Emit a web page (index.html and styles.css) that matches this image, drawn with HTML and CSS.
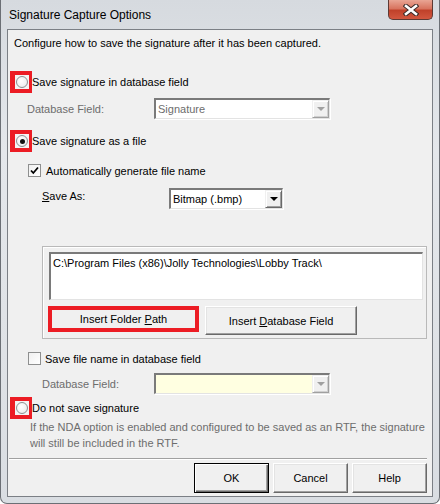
FILE: index.html
```html
<!DOCTYPE html>
<html lang="en">
<head>
  <meta charset="UTF-8">
  <title>Signature Capture Options</title>
  <link rel="stylesheet" href="styles.css">
</head>
<body>
  <div class="window">
    <div class="titlebar">
      <span class="title">Signature Capture Options</span>
      <div class="close">
        <svg width="16" height="12" viewBox="0 0 16 12">
          <path d="M3 2 L13 10 M13 2 L3 10" stroke="#3b2a28" stroke-width="4.6" stroke-linecap="square"/>
          <path d="M3 2 L13 10 M13 2 L3 10" stroke="#ffffff" stroke-width="2.6" stroke-linecap="square"/>
        </svg>
      </div>
    </div>

    <div class="client">
      <div class="intro">Configure how to save the signature after it has been captured.</div>

      <div class="option first">
        <span class="mark"><span class="radio-bg"><span class="radio"></span></span></span>
        <span>Save signature in database field</span>
      </div>

      <div class="field field-1">
        <span class="field-label disabled">Database Field:</span>
        <div class="combo combo-wide disabled-combo">
          <span class="combo-text">Signature</span>
          <span class="combo-btn"><span class="arrow"></span></span>
        </div>
      </div>

      <div class="option second">
        <span class="mark"><span class="radio-bg"><span class="radio checked"></span></span></span>
        <span>Save signature as a file</span>
      </div>

      <div class="check-row auto">
        <span class="checkbox checked">
          <svg width="11" height="11" viewBox="0 0 11 11"><path d="M2 5.5 L4.3 8 L9 2.5" fill="none" stroke="#000" stroke-width="1.8"/></svg>
        </span>
        <span>Automatically generate file name</span>
      </div>

      <div class="field save-as">
        <span class="field-label"><u>S</u>ave As:</span>
        <div class="combo combo-small">
          <span class="combo-text">Bitmap (.bmp)</span>
          <span class="combo-btn"><span class="arrow"></span></span>
        </div>
      </div>

      <div class="panel">
        <div class="path-box">C:\Program Files (x86)\Jolly Technologies\Lobby Track\</div>
        <div class="panel-buttons">
          <button class="btn insert marked">Insert Folder <u>P</u>ath</button>
          <button class="btn insert">Insert <u>D</u>atabase Field</button>
        </div>
      </div>

      <div class="check-row save-name">
        <span class="checkbox"></span>
        <span>Save file name in database field</span>
      </div>

      <div class="field field-2">
        <span class="field-label disabled">Database Field:</span>
        <div class="combo combo-wide yellow disabled-combo">
          <span class="combo-text"></span>
          <span class="combo-btn"><span class="arrow"></span></span>
        </div>
      </div>

      <div class="option third">
        <span class="mark"><span class="radio-bg"><span class="radio"></span></span></span>
        <span>Do not save signature</span>
      </div>

      <div class="note">If the NDA option is enabled and configured to be saved as an RTF, the signature<br>will still be included in the RTF.</div>

      <div class="separator"></div>

      <div class="footer">
        <button class="btn footer-btn default">OK</button>
        <button class="btn footer-btn">Cancel</button>
        <button class="btn footer-btn">Help</button>
      </div>
    </div>
  </div>
</body>
</html>
```

FILE: styles.css
```css
body {
  margin: 0;
  padding: 0;
  background: #ffffff;
  font-family: "Liberation Sans", Arial, sans-serif;
  font-size: 11px;
  color: #000;
}
.window {
  box-sizing: border-box;
  width: 440px;
  height: 504px;
  padding: 0 6px 6px 6px;
  border: 1px solid #6b6f75;
  border-top: none;
  border-radius: 0 0 7px 7px;
  background: linear-gradient(to bottom, #d6dadf 0%, #e4e7eb 30%, #dfe2e6 70%, #d9dde2 100%);
}
.titlebar {
  display: flex;
  align-items: flex-start;
  height: 29px;
}
.title {
  font-size: 12px;
  margin: 8px 0 0 2px;
  color: #000;
}
.close {
  margin-left: auto;
  width: 45px;
  height: 20px;
  box-sizing: border-box;
  border: 1px solid #5d3a34;
  border-top: none;
  border-radius: 0 0 5px 5px;
  background: linear-gradient(to bottom, #e9a594 0%, #d8745f 45%, #c0412a 55%, #d2573f 100%);
  display: flex;
  align-items: center;
  justify-content: center;
}
.client {
  box-sizing: border-box;
  height: 468px;
  border: 1px solid #7b7f85;
  background: #f0f0f0;
}
.intro {
  margin: 6px 0 0 6px;
  height: 14px;
  line-height: 14px;
}
.option {
  display: flex;
  align-items: center;
  height: 22px;
}
.option.first { margin-top: 21px; }
.option.second { margin-top: 11px; }
.option.third { margin-top: 3px; }
.mark {
  display: flex;
  align-items: center;
  justify-content: center;
  width: 22px;
  height: 22px;
  margin-left: 2px;
  background: #ec1c24;
}
.radio-bg {
  display: flex;
  align-items: center;
  justify-content: center;
  width: 14px;
  height: 14px;
  margin-left: 2px;
  background: #f4f4f4;
}
.radio {
  box-sizing: border-box;
  width: 12px;
  height: 12px;
  border: 1px solid #8d8f91;
  border-radius: 50%;
  background: radial-gradient(circle at 40% 40%, #ffffff 0%, #f2f2f2 60%, #dcdcdc 100%);
  display: flex;
  align-items: center;
  justify-content: center;
}
.radio.checked::after {
  content: "";
  width: 5px;
  height: 5px;
  border-radius: 50%;
  background: #111;
}
.field {
  display: flex;
  align-items: center;
  height: 21px;
}
.field-1 { margin-top: 5px; padding-left: 19px; }
.field-1 .field-label { width: 127px; }
.save-as { margin-top: 11px; padding-left: 34px; align-items: flex-start; }
.save-as .field-label { width: 127px; padding-top: 2px; }
.field-2 { margin-top: 8px; padding-left: 34px; }
.field-2 .field-label { width: 112px; }
.field-label.disabled { color: #6d6d6d; }
.combo {
  box-sizing: border-box;
  display: flex;
  align-items: stretch;
  height: 21px;
  background: #fff;
  border-top: 2px solid #7a7a7a;
  border-left: 2px solid #7a7a7a;
  border-bottom: 1px solid #e3e3e3;
  border-right: 1px solid #e3e3e3;
  box-shadow: 1px 1px 0 #ffffff;
}
.combo-wide { width: 176px; }
.combo-small { width: 114px; }
.combo.yellow { background: #ffffe1; }
.combo-text {
  flex: 1;
  padding: 2px 0 0 2px;
  line-height: 14px;
}
.disabled-combo .combo-text { color: #6d6d6d; }
.combo-btn {
  box-sizing: border-box;
  width: 17px;
  background: #f0f0f0;
  border-top: 1px solid #f0f0f0;
  border-left: 1px solid #f0f0f0;
  border-right: 1px solid #696969;
  border-bottom: 1px solid #696969;
  box-shadow: inset 1px 1px 0 #ffffff, inset -1px -1px 0 #a0a0a0;
  display: flex;
  align-items: center;
  justify-content: center;
}
.arrow {
  width: 0;
  height: 0;
  border-left: 4px solid transparent;
  border-right: 4px solid transparent;
  border-top: 4px solid #000;
}
.disabled-combo .arrow { border-top-color: #a0a0a0; }
.disabled-combo .combo-btn {
  border-right-color: #a0a0a0;
  border-bottom-color: #a0a0a0;
  box-shadow: inset 1px 1px 0 #ffffff, inset -1px -1px 0 #d0d0d0;
}
.check-row {
  display: flex;
  align-items: center;
  height: 13px;
  padding-left: 20px;
  gap: 5px;
}
.check-row.auto { margin-top: 12px; }
.check-row.save-name { margin-top: 13px; gap: 4px; }
.checkbox {
  box-sizing: border-box;
  width: 13px;
  height: 13px;
  border: 1px solid #8e8f8f;
  background: linear-gradient(135deg, #f0f0f0, #ffffff);
  display: flex;
  align-items: center;
  justify-content: center;
}
.panel {
  box-sizing: border-box;
  margin: 37px 0 0 34px;
  width: 385px;
  height: 93px;
  padding: 5px 5px 3px 5px;
  border: 1px solid #b9b9b9;
  box-shadow: inset 1px 1px 0 #ffffff;
}
.path-box {
  box-sizing: border-box;
  margin-left: 1px;
  width: 374px;
  height: 48px;
  padding: 2px 2px;
  line-height: 14px;
  background: #fff;
  border-top: 2px solid #7a7a7a;
  border-left: 2px solid #7a7a7a;
  border-bottom: 1px solid #e3e3e3;
  border-right: 1px solid #e3e3e3;
}
.panel-buttons {
  display: flex;
  align-items: flex-start;
  gap: 6px;
  margin-top: 6px;
}
.btn {
  box-sizing: border-box;
  font-family: "Liberation Sans", Arial, sans-serif;
  font-size: 11px;
  color: #000;
  padding: 0;
  background: #f0f0f0;
  border-top: 1px solid #ffffff;
  border-left: 1px solid #ffffff;
  border-right: 1px solid #696969;
  border-bottom: 1px solid #696969;
  box-shadow: inset -1px -1px 0 #a0a0a0, inset 1px 1px 0 #e3e3e3;
}
.insert {
  width: 152px;
  height: 29px;
}
.insert.marked {
  width: 151px;
  height: 26px;
  border: 4px solid #ec1c24;
  box-shadow: none;
  background: #f0f0f0;
}
.note {
  padding-left: 22px;
  line-height: 16px;
  color: #6d6d6d;
  white-space: nowrap;
}
.separator {
  margin: 7px 0 0 1px;
  width: 418px;
  height: 1px;
  background: #a0a0a0;
  border-bottom: 1px solid #ffffff;
}
.footer {
  display: flex;
  justify-content: flex-end;
  gap: 4px;
  margin-top: 3px;
  padding-right: 5px;
}
.footer-btn {
  width: 75px;
  height: 30px;
}
.footer-btn.default {
  border: 1px solid #000;
  box-shadow: inset 1px 1px 0 #ffffff, inset -1px -1px 0 #696969, inset -2px -2px 0 #a0a0a0;
}
```
